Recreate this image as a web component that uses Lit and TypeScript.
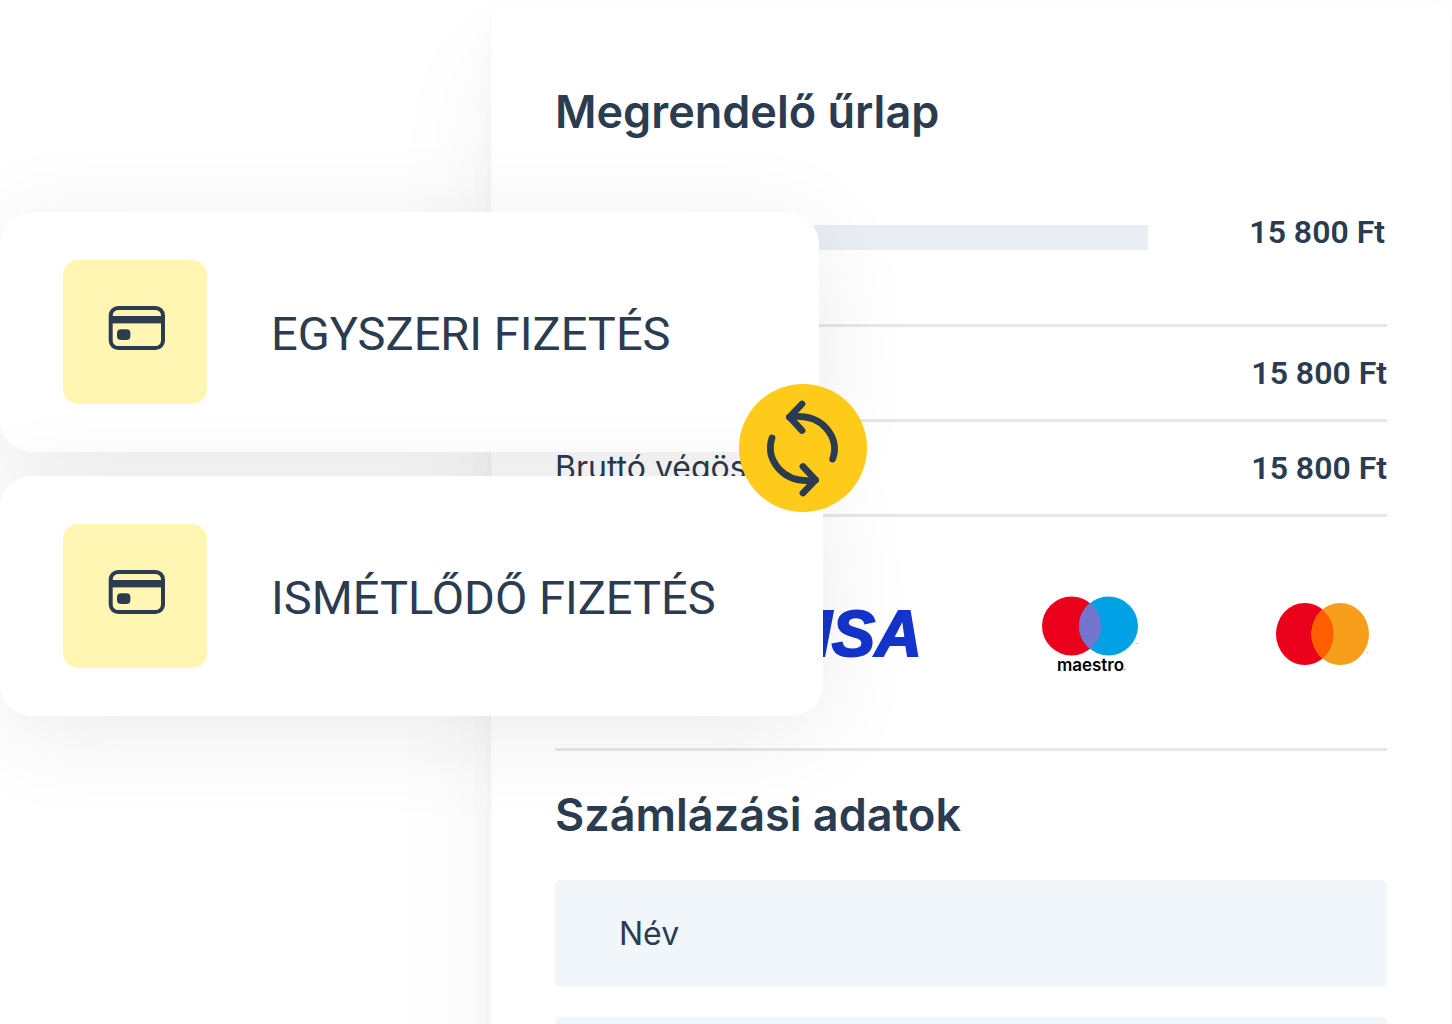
import { LitElement, html, css, svg } from "lit";
import { customElement, property } from "lit/decorators.js";

@customElement("payment-option")
class PaymentOption extends LitElement {
  @property() label = "";

  static styles = css`
    :host {
      display: block;
    }
    .option {
      display: flex;
      align-items: center;
      gap: 64px;
      width: 100%;
      box-sizing: border-box;
      padding: 48px 48px 48px 63px;
      border: 0;
      border-radius: 32px;
      background: #fff;
      box-shadow: 0 16px 100px rgba(0, 0, 0, 0.08);
      color: #2b3b50;
      font-family: Roboto, sans-serif;
      font-size: 47px;
      line-height: 56px;
      text-align: left;
      white-space: nowrap;
    }
    .tile {
      flex: none;
      width: 144px;
      height: 144px;
      border-radius: 15px;
      background: #fff6b3;
    }
    .label {
      padding-top: 4px;
    }
  `;

  render() {
    return html`
      <button class="option" type="button">
        <svg class="tile" viewBox="0 0 144 144" aria-hidden="true">
          <rect x="47.7" y="48" width="52.3" height="40" rx="7.5" fill="none" stroke="#2b3b50" stroke-width="4" />
          <rect x="46" y="56" width="55" height="7.4" fill="#2b3b50" />
          <rect x="54" y="69.3" width="13.4" height="10.6" rx="4" fill="#2b3b50" />
        </svg>
        <span class="label">${this.label}</span>
      </button>
    `;
  }
}

const maestroMark = svg`
  <circle cx="29.5" cy="30" r="29.5" fill="#eb001b" />
  <circle cx="66.5" cy="30" r="29.5" fill="#00a2e5" />
  <path d="M48 7a29.5 29.5 0 0 1 0 46a29.5 29.5 0 0 1 0-46z" fill="#7375cf" />
  <path d="M93.5 47.5h2" stroke="#7fd0f2" stroke-width="1" />
  <circle cx="82.5" cy="73.5" r="0.8" fill="#888" />
`;

const mastercardMark = svg`
  <ellipse cx="28.8" cy="31" rx="28.8" ry="31" fill="#eb001b" />
  <ellipse cx="64.2" cy="31" rx="28.8" ry="31" fill="#f79f1a" />
  <path d="M46.5 6.5a28.8 31 0 0 1 0 49a28.8 31 0 0 1 0-49z" fill="#ff5f00" />
  <path d="M90.5 49.5h2" stroke="#f9b95c" stroke-width="1" />
`;

@customElement("app-root")
class AppRoot extends LitElement {
  static styles = css`
    :host {
      display: block;
      color: #2b3b50;
      font-family: Inter, "Liberation Sans", sans-serif;
    }
    .page {
      position: relative;
      height: 100vh;
      overflow: hidden;
      background: #fff;
    }
    .order {
      box-sizing: border-box;
      min-height: 100%;
      margin: 1px 1px 0 calc(50% - 235px);
      padding: 83px 64px 64px;
      border-radius: 16px;
      background: #fff;
      box-shadow: 0 60px 120px rgba(0, 0, 0, 0.05), 0 24px 32px rgba(0, 0, 0, 0.03), 0 0 3px rgba(0, 0, 0, 0.04);
    }
    .title {
      margin: 0;
      font-size: 45px;
      line-height: 56px;
      font-weight: 600;
    }
    .summary {
      width: 100%;
      border-collapse: separate;
      border-spacing: 0;
      font-size: 32px;
      line-height: 40px;
    }
    .summary th,
    .summary td {
      padding: 26px 0;
      border-bottom: 3px solid #e4e8e7;
      vertical-align: top;
      white-space: nowrap;
    }
    .summary th {
      font-weight: 400;
      text-align: left;
    }
    .summary td {
      font-family: Roboto, sans-serif;
      font-weight: 600;
      text-align: right;
    }
    .summary .item th,
    .summary .item td {
      padding: 72px 0;
    }
    .summary .item td {
      padding-right: 2px;
    }
    .bar {
      height: 25px;
      margin: 13px 0 0;
      background: #e9eef5;
    }
    .brands {
      display: flex;
      justify-content: flex-end;
      align-items: center;
      gap: 124px;
      height: 228px;
      padding: 3px 18px 0 0;
      border-bottom: 3px solid #e4e8e7;
    }
    .cards {
      display: flex;
      align-items: center;
      gap: 120px;
    }
    .visa {
      color: #1434cb;
      font: italic 700 65px/72px "Liberation Sans", sans-serif;
      -webkit-text-stroke: 2px #1434cb;
    }
    .maestro {
      display: flex;
      flex-direction: column;
      width: 110px;
      color: #000;
      font-size: 17px;
      font-weight: 600;
      line-height: 16px;
    }
    .maestro-name {
      width: 97px;
      text-align: center;
    }
    .billing {
      padding-top: 36px;
    }
    .fields {
      display: grid;
      gap: 30px;
      padding-top: 37px;
    }
    .field {
      display: flex;
      align-items: center;
      gap: 24px;
      height: 107px;
      padding: 0 64px;
      border-radius: 5px;
      background: #f1f6fa;
      font-size: 32px;
      line-height: 40px;
    }
    .input {
      flex: 1;
      min-width: 0;
      border: 0;
      outline: 0;
      background: transparent;
      color: inherit;
      font: inherit;
    }
    .options {
      position: absolute;
      top: 212px;
      left: 0;
      display: grid;
      gap: 24px;
      width: calc(50% + 97px);
    }
    .once {
      margin: 0 4px 0 0;
    }
    .swap {
      position: absolute;
      top: 172px;
      right: -44px;
      width: 128px;
      height: 128px;
      padding: 0;
      border: 0;
      border-radius: 50%;
      background: #ffcb1a;
      color: inherit;
    }
    .swap-icon,
    .mark {
      display: block;
    }
  `;

  render() {
    return html`
      <main class="page">
        <section class="order">
          <h1 class="title">Megrendelő űrlap</h1>
          <table class="summary">
            <tr class="item">
              <th><div class="bar"></div></th>
              <td width="237">15 800 Ft</td>
            </tr>
            <tr>
              <th></th>
              <td>15 800 Ft</td>
            </tr>
            <tr>
              <th scope="row">Bruttó végösszeg</th>
              <td>15 800 Ft</td>
            </tr>
          </table>
          <div class="brands">
            <div class="cards">
              <span class="visa">VISA</span>
              <div class="maestro">
                <svg class="mark" width="110" height="61" viewBox="0 0 110 61" overflow="visible" aria-hidden="true">${maestroMark}</svg>
                <span class="maestro-name">maestro</span>
              </div>
            </div>
            <svg class="mark" width="93" height="62" viewBox="0 0 93 62" aria-hidden="true">${mastercardMark}</svg>
          </div>
          <form class="billing">
            <h2 class="title" id="billing">Számlázási adatok</h2>
            <div class="fields">
              <label class="field">Név<input class="input" type="text" name="name" /></label>
              <label class="field"><input class="input" type="text" aria-labelledby="billing" /></label>
            </div>
          </form>
        </section>
        <div class="options">
          <payment-option class="once" label="EGYSZERI FIZETÉS"></payment-option>
          <payment-option label="ISMÉTLŐDŐ FIZETÉS"></payment-option>
          <button class="swap" type="button">
            <svg class="swap-icon" viewBox="0 0 128 128" aria-hidden="true">
              <g fill="none" stroke="#2b3b50" stroke-width="6.8" stroke-linecap="round" stroke-linejoin="round">
                <path d="M63 20L50.5 33L63 46.5" />
                <path d="M50.5 33C66 31 78 34 87 44C95 53 97.5 64 93.7 75" />
                <path d="M64 82.5L76.5 96L64 109" />
                <path d="M76.5 96C61 98 49 95 40 85C32 76 29.5 65 33 54" />
              </g>
            </svg>
          </button>
        </div>
      </main>
    `;
  }
}
